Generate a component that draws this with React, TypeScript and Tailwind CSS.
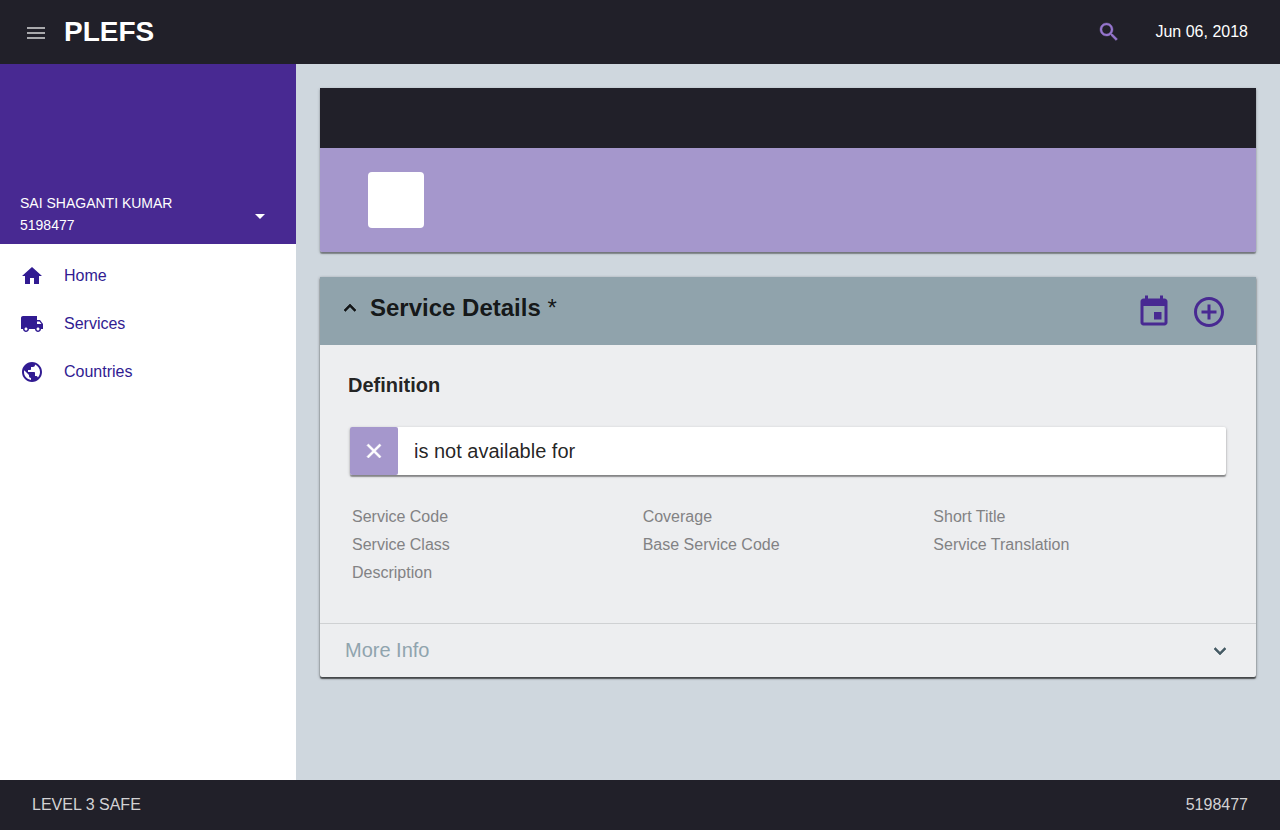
import React, { useState } from "react";

const icons = {
  menu: "M3 18h18v-2H3v2zm0-5h18v-2H3v2zm0-7v2h18V6H3z",
  search:
    "M15.5 14h-.79l-.28-.27C15.41 12.59 16 11.11 16 9.5 16 5.91 13.09 3 9.5 3S3 5.91 3 9.5 5.91 16 9.5 16c1.61 0 3.09-.59 4.23-1.57l.27.28v.79l5 4.99L20.49 19l-4.99-5zm-6 0C7.01 14 5 11.99 5 9.5S7.01 5 9.5 5 14 7.01 14 9.5 11.99 14 9.5 14z",
  caret: "M7 10l5 5 5-5z",
  home: "M10 20v-6h4v6h5v-8h3L12 3 2 12h3v8z",
  truck:
    "M20 8h-3V4H3c-1.1 0-2 .9-2 2v11h2c0 1.66 1.34 3 3 3s3-1.34 3-3h6c0 1.66 1.34 3 3 3s3-1.34 3-3h2v-5l-3-4zM6 18.5c-.83 0-1.5-.67-1.5-1.5s.67-1.5 1.5-1.5 1.5.67 1.5 1.5-.67 1.5-1.5 1.5zm13.5-9l1.96 2.5H17V9.5h2.5zm-1.5 9c-.83 0-1.5-.67-1.5-1.5s.67-1.5 1.5-1.5 1.5.67 1.5 1.5-.67 1.5-1.5 1.5z",
  globe:
    "M12 2C6.48 2 2 6.48 2 12s4.48 10 10 10 10-4.48 10-10S17.52 2 12 2zm-1 17.93c-3.95-.49-7-3.85-7-7.93 0-.62.08-1.21.21-1.79L9 15v1c0 1.1.9 2 2 2v1.93zm6.9-2.54c-.26-.81-1-1.39-1.9-1.39h-1v-3c0-.55-.45-1-1-1H8v-2h2c.55 0 1-.45 1-1V7h2c1.1 0 2-.9 2-2v-.41c2.93 1.19 5 4.06 5 7.41 0 2.08-.8 3.97-2.1 5.39z",
  up: "M12 8l-6 6 1.41 1.41L12 10.83l4.59 4.58L18 14z",
  down: "M16.59 8.59L12 13.17 7.41 8.59 6 10l6 6 6-6z",
  event:
    "M17 12h-5v5h5v-5zM16 1v2H8V1H6v2H5c-1.11 0-1.99.9-1.99 2L3 19c0 1.1.89 2 2 2h14c1.1 0 2-.9 2-2V5c0-1.1-.9-2-2-2h-1V1h-2zm3 18H5V8h14v11z",
  add: "M13 7h-2v4H7v2h4v4h2v-4h4v-2h-4V7zm-1-5C6.48 2 2 6.48 2 12s4.48 10 10 10 10-4.48 10-10S17.52 2 12 2zm0 18c-4.41 0-8-3.59-8-8s3.59-8 8-8 8 3.59 8 8-3.59 8-8 8z",
  close:
    "M19 6.41L17.59 5 12 10.59 6.41 5 5 6.41 10.59 12 5 17.59 6.41 19 12 13.41 17.59 19 19 17.59 13.41 12z",
};

type IconName = keyof typeof icons;

function Icon({
  name,
  className = "size-6",
  weight = 0,
}: {
  name: IconName;
  className?: string;
  weight?: number;
}) {
  return (
    <svg
      viewBox="0 0 24 24"
      fill="currentColor"
      stroke="currentColor"
      strokeWidth={weight}
      aria-hidden="true"
      className={`shrink-0 ${className}`}
    >
      <path d={icons[name]} />
    </svg>
  );
}

const navItems: { label: string; icon: IconName }[] = [
  { label: "Home", icon: "home" },
  { label: "Services", icon: "truck" },
  { label: "Countries", icon: "globe" },
];

const fields = [
  "Service Code",
  "Coverage",
  "Short Title",
  "Service Class",
  "Base Service Code",
  "Service Translation",
  "Description",
];

function Header() {
  return (
    <header className="flex h-16 items-center bg-[#212029] px-6 text-white">
      <button type="button" aria-label="Toggle menu" className="pt-0.5 text-[#a9a9ac]">
        <Icon name="menu" />
      </button>
      <h1 className="ml-4 text-[28px] leading-8 font-bold">PLEFS</h1>
      <button type="button" aria-label="Search" className="ml-auto text-[#9575cd]">
        <Icon name="search" weight={0.4} />
      </button>
      <time dateTime="2018-06-06" className="mr-2 ml-8 pl-0.5">
        Jun 06, 2018
      </time>
    </header>
  );
}

function Sidebar() {
  return (
    <aside className="w-74 shrink-0 bg-white">
      <div className="flex h-45 items-end justify-between bg-[#482992] pr-6 pb-2 pl-5 text-sm leading-[22px] text-white">
        <div>
          <p>SAI SHAGANTI KUMAR</p>
          <p>5198477</p>
        </div>
        <button type="button" aria-label="Account options" className="mb-2">
          <Icon name="caret" />
        </button>
      </div>
      <nav aria-label="Main" className="pt-2">
        <ul>
          {navItems.map((item) => (
            <li key={item.label}>
              <a href="#" className="flex h-12 items-center gap-5 px-5 text-[#311b92]">
                <Icon name={item.icon} />
                {item.label}
              </a>
            </li>
          ))}
        </ul>
      </nav>
    </aside>
  );
}

function ServiceDetails() {
  const [open, setOpen] = useState(true);
  return (
    <section className="rounded-b-xs bg-[#edeef0] text-black/87 shadow-[0_2px_1px_rgba(0,0,0,0.5),0_1px_3px_rgba(0,0,0,0.5)]">
      <div className="flex h-17 items-center justify-between bg-[#90a3ac] pr-[29px] pl-[18px]">
        <h2 className="pb-1.5 text-2xl leading-7 font-bold">
          <button
            type="button"
            aria-expanded={open}
            onClick={() => setOpen(!open)}
            className="flex items-center gap-2"
          >
            <Icon name={open ? "up" : "down"} weight={0.6} />
            <span>
              Service Details <span className="font-normal">*</span>
            </span>
          </button>
        </h2>
        <div className="flex gap-[19px] pt-0.5 text-[#482992]">
          <button type="button" aria-label="Schedule">
            <Icon name="event" className="size-9" />
          </button>
          <button type="button" aria-label="Add service">
            <Icon name="add" className="size-9" />
          </button>
        </div>
      </div>
      {open && (
        <div className="px-7 pt-7 pb-9">
          <h3 className="text-xl leading-6 font-bold">Definition</h3>
          <div className="mx-0.5 mt-[30px] flex h-12 items-center rounded-xs bg-white text-xl shadow-[0_2px_1px_rgba(0,0,0,0.3),0_1px_3px_rgba(0,0,0,0.3)]">
            <button
              type="button"
              aria-label="Dismiss"
              className="flex size-12 items-center justify-center rounded-xs bg-[#a597cc] text-white"
            >
              <Icon name="close" weight={0.6} />
            </button>
            <p className="pl-4">is not available for</p>
          </div>
          <ul className="mx-1 mt-7 grid grid-cols-3 leading-7 text-[#828284]">
            {fields.map((field) => (
              <li key={field}>{field}</li>
            ))}
          </ul>
        </div>
      )}
      <button
        type="button"
        className="flex w-full items-center justify-between border-t border-[#cfd1d3] py-3 pr-6 pl-[25px] text-xl leading-[29px] text-[#90a4ae]"
      >
        More Info
        <Icon name="down" weight={0.6} className="size-6 text-[#455a64]" />
      </button>
    </section>
  );
}

export default function App() {
  return (
    <div className="flex min-h-screen flex-col font-['Liberation_Sans',Arial,sans-serif] text-base">
      <Header />
      <div className="flex flex-1">
        <Sidebar />
        <main className="flex flex-1 flex-col gap-[25px] bg-[#cfd7de] p-6">
          <section className="rounded-b-xs shadow-[0_2px_1px_rgba(0,0,0,0.3),0_1px_3px_rgba(0,0,0,0.3)]">
            <div className="h-15 bg-[#212029]" />
            <div className="rounded-b-xs bg-[#a597cc] px-12 py-6">
              <div className="size-14 rounded bg-white" />
            </div>
          </section>
          <ServiceDetails />
        </main>
      </div>
      <footer className="flex h-[50px] items-center justify-between bg-[#212029] px-8 text-[#d3d2d4]">
        <span>LEVEL 3 SAFE</span>
        <span>5198477</span>
      </footer>
    </div>
  );
}
